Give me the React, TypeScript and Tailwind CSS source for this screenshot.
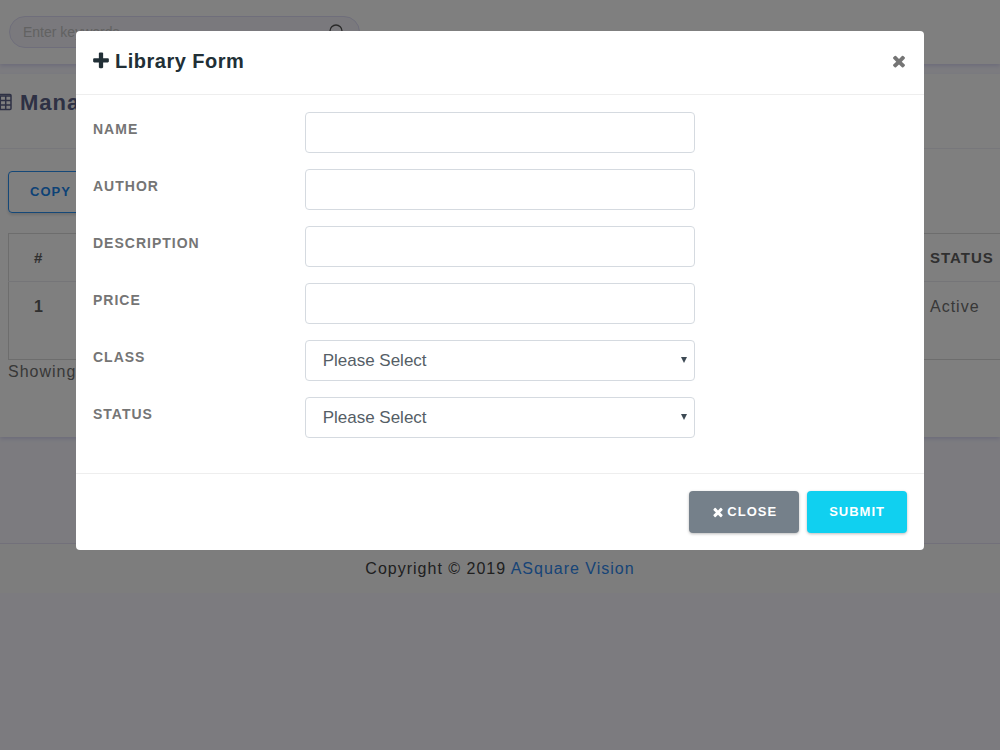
import type { ReactNode } from "react";

const PLUS =
  "M1600 736v192q0 40-28 68t-68 28h-416v416q0 40-28 68t-68 28h-192q-40 0-68-28t-28-68v-416h-416q-40 0-68-28t-28-68v-192q0-40 28-68t68-28h416v-416q0-40 28-68t68-28h192q40 0 68 28t28 68v416h416q40 0 68 28t28 68z";
const TIMES =
  "M1490 1322q0 40-28 68l-136 136q-28 28-68 28t-68-28l-294-294-294 294q-28 28-68 28t-68-28l-136-136q-28-28-28-68t28-68l294-294-294-294q-28-28-28-68t28-68l136-136q28-28 68-28t68 28l294 294 294-294q28-28 68-28t68 28l136 136q28 28 28 68t-28 68l-294 294 294 294q28 28 28 68z";

function Glyph({ d, className }: { d: string; className: string }) {
  return (
    <svg viewBox="0 0 1792 1792" fill="currentColor" aria-hidden="true" className={className}>
      <path d={d} />
    </svg>
  );
}

function TableIcon() {
  return (
    <svg viewBox="0 0 18 18" fill="none" stroke="currentColor" strokeWidth="1.5" aria-hidden="true" className="size-[18px] shrink-0">
      <rect x="1" y="1.5" width="16" height="15" rx="1" />
      <path d="M1 3h16M1 7.5h16M1 12h16M6.3 3v13.5M11.7 3v13.5" />
    </svg>
  );
}

function Field({ id, label, children }: { id: string; label: string; children: ReactNode }) {
  return (
    <div className="flex">
      <label htmlFor={id} className="w-[26%] shrink-0 pt-2 text-[14px] leading-[18px] font-bold tracking-[1px] text-[#757575] uppercase">
        {label}
      </label>
      <div className="w-[48%] shrink-0">{children}</div>
    </div>
  );
}

const control = "block h-[41px] w-full rounded-[4px] border border-[#d5dae0] bg-white px-[17px] text-[17px] text-[#555e66]";

function TextField({ id, label }: { id: string; label: string }) {
  return (
    <Field id={id} label={label}>
      <input id={id} type="text" className={control} />
    </Field>
  );
}

function SelectField({ id, label }: { id: string; label: string }) {
  return (
    <Field id={id} label={label}>
      <div className="relative">
        <select id={id} className={`${control} appearance-none`}>
          <option>Please Select</option>
        </select>
        <svg viewBox="0 0 6 6" fill="#3d4a54" aria-hidden="true" className="pointer-events-none absolute top-[17px] right-[8px] size-[6px]">
          <path d="M0 0h6L3 6z" />
        </svg>
      </div>
    </Field>
  );
}

function LibraryPage() {
  return (
    <div className="text-[16px] leading-6 tracking-[1px] text-[#707070]">
      <header className="h-16 bg-white px-[9px] pt-4 shadow-[0_2px_4px_#d9d8f4]">
        <div className="relative w-[351px]">
          <input
            type="text"
            aria-label="Enter keywords"
            placeholder="Enter keywords"
            className="h-8 w-full rounded-full border border-[#dedcf6] bg-[#f4f3fa] px-[13px] text-[14px] tracking-normal placeholder:text-[#c4c4c4]"
          />
          <svg viewBox="0 0 16 16" fill="none" stroke="#555" strokeWidth="1.3" aria-hidden="true" className="absolute top-2 right-[15px] size-4">
            <circle cx="7" cy="7" r="6" />
            <path d="m11.5 11.5 4 4" />
          </svg>
        </div>
      </header>

      <main className="mt-[10px] h-[363px] overflow-hidden bg-white shadow-[0_2px_4px_#d9d8f4]">
        <h2 className="-ml-[6px] flex h-[75px] items-start gap-2 border-b border-[#efeff6] pt-[15px] text-[22px] leading-7 font-bold text-[#5c6289]">
          <span className="pt-[4px]"><TableIcon /></span>
          Manage
        </h2>
        <div className="pt-[22px] pl-2">
          <button type="button" className="h-[42px] rounded-[4px] border border-[#2a90f0] px-[21px] text-[13px] font-bold tracking-[1px] text-[#1a84ec] uppercase shadow-[0_2px_3px_#ddd]">
            Copy
          </button>
          <table className="mt-5 w-full table-fixed border border-r-0 border-[#dadada] text-left">
            <thead>
              <tr className="h-12 border-b border-[#ebebf0] text-[15px] text-[#606060] uppercase">
                <th className="pl-[25px]">#</th>
                <th className="w-[70px]">Status</th>
              </tr>
            </thead>
            <tbody>
              <tr className="h-[78px] align-top">
                <th className="pt-[13px] pl-[25px] text-[#606060]">1</th>
                <td className="pt-[13px]">Active</td>
              </tr>
            </tbody>
          </table>
          <p>Showing</p>
        </div>
      </main>

      <footer className="mt-[106px] h-[50px] border-t border-[#e4e1f5] bg-[#fbfbfb] pt-[13px] text-center text-[#404040]">
        Copyright © 2019 <a href="#" className="text-[#2f88ee]">ASquare Vision</a>
      </footer>
    </div>
  );
}

export default function App() {
  return (
    <div className="min-h-screen bg-[#f8f7ff] font-['Liberation_Sans',Arial,sans-serif]">
      <LibraryPage />
      <div className="fixed inset-0 bg-black/50 px-[76px] pt-[31px]">
        <section role="dialog" aria-modal="true" aria-labelledby="form-title" className="overflow-hidden rounded-[4px] bg-white">
          <div className="flex h-16 items-center justify-between border-b border-[#eee] px-4 pb-1">
            <h1 id="form-title" className="flex items-center gap-1 text-[20px] leading-7 font-bold tracking-wide text-[#212f36]">
              <Glyph d={PLUS} className="-ml-px size-5" />
              Library Form
            </h1>
            <button type="button" aria-label="Close dialog" className="text-[#757575]">
              <Glyph d={TIMES} className="size-[18px]" />
            </button>
          </div>
          <form>
            <div className="flex flex-col gap-4 px-[17px] pt-[17px] pb-[35px]">
              <TextField id="name" label="Name" />
              <TextField id="author" label="Author" />
              <TextField id="description" label="Description" />
              <TextField id="price" label="Price" />
              <SelectField id="class" label="Class" />
              <SelectField id="status" label="Status" />
            </div>
            <div className="flex justify-end gap-2 border-t border-[#eee] p-[17px] text-[13px] font-bold text-white">
              <button type="button" className="flex h-[42px] items-center gap-[2px] rounded-[4px] bg-[#75808a] px-[22px] tracking-[1px] uppercase shadow-[0_1px_3px_#bbb]">
                <Glyph d={TIMES} className="size-[14px]" />
                Close
              </button>
              <button type="submit" className="h-[42px] rounded-[4px] bg-[#10d0f0] px-[22px] tracking-[1px] uppercase shadow-[0_1px_3px_#bbb]">
                Submit
              </button>
            </div>
          </form>
        </section>
      </div>
    </div>
  );
}
